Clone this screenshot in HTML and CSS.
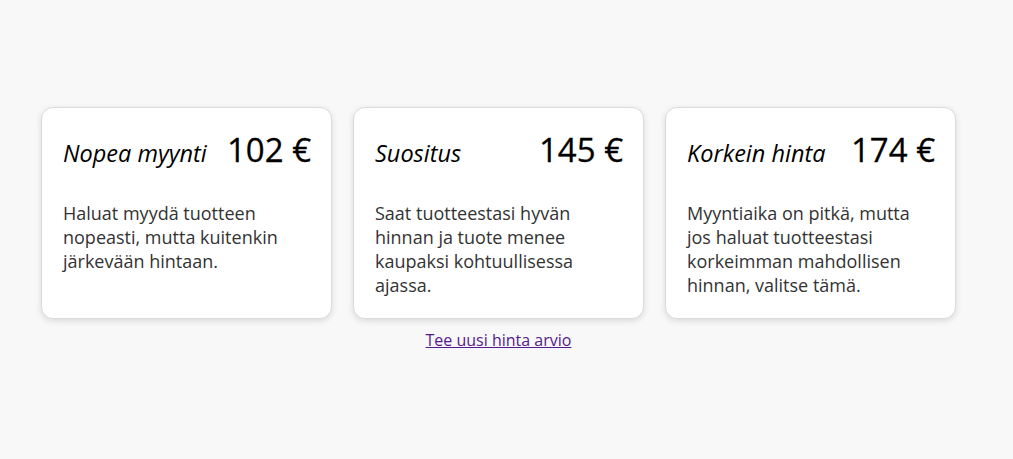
FILE: index.html
```html
<!DOCTYPE html>
<html lang="fi">
<head>
<meta charset="utf-8">
<title>Hinta-arvio</title>
<link rel="stylesheet" href="styles.css">
</head>
<body>
<main class="page">
  <div class="cards">
    <section class="card">
      <div class="card-head">
        <h2 class="card-title">Nopea myynti</h2>
        <div class="card-price">102 €</div>
      </div>
      <p class="card-text">Haluat myydä tuotteen nopeasti, mutta kuitenkin järkevään hintaan.</p>
    </section>
    <section class="card">
      <div class="card-head">
        <h2 class="card-title">Suositus</h2>
        <div class="card-price">145 €</div>
      </div>
      <p class="card-text">Saat tuotteestasi hyvän hinnan ja tuote menee kaupaksi kohtuullisessa ajassa.</p>
    </section>
    <section class="card">
      <div class="card-head">
        <h2 class="card-title">Korkein hinta</h2>
        <div class="card-price">174 €</div>
      </div>
      <p class="card-text">Myyntiaika on pitkä, mutta jos haluat tuotteestasi korkeimman mahdollisen hinnan, valitse tämä.</p>
    </section>
  </div>
  <div class="again">
    <a class="again-link" href="#">Tee uusi hinta arvio</a>
  </div>
</main>
</body>
</html>
```

FILE: styles.css
```css
html, body {
  margin: 0;
  padding: 0;
}
body {
  background: #f8f8f8;
  font-family: "Open Sans", "Noto Sans", sans-serif;
  color: #000;
}
.page {
  width: 915px;
  margin-left: 41px;
  padding-top: 107px;
}
.cards {
  display: flex;
  gap: 21px;
  align-items: stretch;
}
.card {
  flex: 0 0 291px;
  box-sizing: border-box;
  background: #fff;
  border: 1px solid #dcdcdc;
  border-radius: 12px;
  box-shadow: 0 2px 6px rgba(0, 0, 0, 0.12);
  padding: 19px 20px 21px 21px;
}
.card-head {
  display: flex;
  justify-content: space-between;
  align-items: baseline;
}
.card-title {
  margin: 0;
  font-size: 23.5px;
  font-style: italic;
  font-weight: 400;
}
.card-price {
  font-size: 33px;
  font-weight: 400;
  -webkit-text-stroke: 0.3px #000;
}
.card-text {
  margin: 29px 0 0;
  font-size: 18px;
  line-height: 24px;
  color: #333;
  max-width: 249px;
}
.again {
  margin-top: 10px;
  text-align: center;
}
.again-link {
  font-size: 16px;
  color: #551a8b;
}
```
